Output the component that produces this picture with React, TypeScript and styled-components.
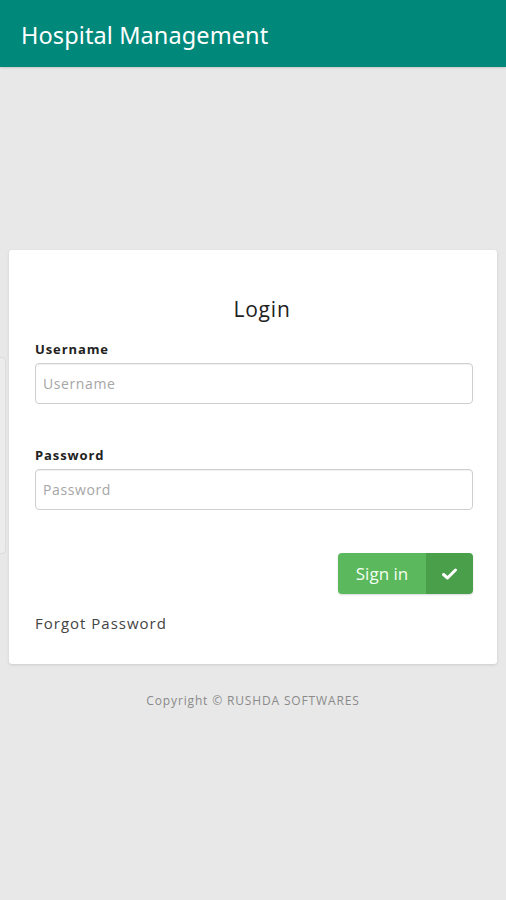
import React from "react";
import styled, { createGlobalStyle } from "styled-components";

const Global = createGlobalStyle`
  html, body { margin: 0; padding: 0; }
  body {
    background: #e8e8e8;
    font-family: "Open Sans", "Lato", sans-serif;
    width: 506px;
    min-height: 900px;
  }
`;

const Page = styled.div`
  position: relative;
  min-height: 900px;
  display: flex;
  flex-direction: column;
  background: #e8e8e8;
`;

const AppBar = styled.header`
  height: 67px;
  background: #00897b;
  display: flex;
  align-items: center;
  padding: 2px 0 0 21px;
  box-sizing: border-box;
  box-shadow: 0 1px 2px rgba(0, 0, 0, 0.15);
`;

const Title = styled.h1`
  margin: 0;
  color: #ffffff;
  font-family: "Noto Sans", "Open Sans", sans-serif;
  font-weight: 400;
  font-size: 23.5px;
  letter-spacing: 0.1px;
`;

const Content = styled.main`
  padding: 183px 9px 0 9px;
  display: flex;
  flex-direction: column;
  align-items: stretch;
`;

const Card = styled.section`
  background: #ffffff;
  border-radius: 3px;
  box-shadow: 0 1px 3px rgba(0, 0, 0, 0.12);
  padding: 45px 24px 31px 26px;
  display: flex;
  flex-direction: column;
`;

const CardTitle = styled.h2`
  margin: 0 0 17px 0;
  padding-left: 16px;
  text-align: center;
  font-family: "Open Sans", sans-serif;
  font-weight: 400;
  font-size: 21px;
  color: #222;
  letter-spacing: 0.8px;
`;

const Field = styled.div<{ $gap?: number }>`
  display: flex;
  flex-direction: column;
  margin-bottom: ${(p) => p.$gap ?? 0}px;
`;

const Label = styled.label`
  font-family: "Open Sans", sans-serif;
  font-weight: 700;
  font-size: 13px;
  color: #222;
  letter-spacing: 0.9px;
  margin-bottom: 5px;
`;

const Input = styled.input`
  height: 41px;
  box-sizing: border-box;
  border: 1px solid #cfcfcf;
  border-radius: 4px;
  padding: 0 7px;
  font-family: "Open Sans", sans-serif;
  font-size: 14px;
  color: #333;
  box-shadow: inset 0 1px 1px rgba(0, 0, 0, 0.06);
  outline: none;
  letter-spacing: 0.6px;
  &::placeholder {
    color: #a6a6a6;
  }
`;

const Actions = styled.div`
  display: flex;
  justify-content: flex-end;
  margin-top: 43px;
`;

const SignIn = styled.button`
  display: flex;
  height: 41px;
  padding: 0;
  border: none;
  border-radius: 4px;
  overflow: hidden;
  cursor: pointer;
  box-shadow: 0 1px 2px rgba(0, 0, 0, 0.15);
`;

const SignInText = styled.span`
  width: 88px;
  background: #5cb85c;
  color: #f3fff3;
  font-family: "Open Sans", sans-serif;
  font-size: 17px;
  display: flex;
  align-items: center;
  justify-content: center;
`;

const SignInIcon = styled.span`
  width: 47px;
  background: #4a9f4a;
  display: flex;
  align-items: center;
  justify-content: center;
`;

const Forgot = styled.a`
  margin-top: 19px;
  font-family: "Open Sans", sans-serif;
  font-size: 15px;
  color: #444;
  letter-spacing: 1px;
  text-decoration: none;
`;

const Copyright = styled.p`
  margin: 28px 0 0 0;
  text-align: center;
  font-family: "Open Sans", sans-serif;
  font-size: 12px;
  color: #8a8a8a;
  letter-spacing: 0.85px;
`;

const EdgeTab = styled.div`
  position: absolute;
  left: -6px;
  top: 357px;
  width: 10px;
  height: 195px;
  border: 1px solid #dcdcdc;
  border-radius: 4px;
  background: #ececec;
`;

export default function App() {
  return (
    <>
      <Global />
      <Page>
        <AppBar>
          <Title>Hospital Management</Title>
        </AppBar>
        <EdgeTab />
        <Content>
          <Card>
            <CardTitle>Login</CardTitle>
            <Field $gap={42}>
              <Label>Username</Label>
              <Input placeholder="Username" />
            </Field>
            <Field>
              <Label>Password</Label>
              <Input type="password" placeholder="Password" />
            </Field>
            <Actions>
              <SignIn>
                <SignInText>Sign in</SignInText>
                <SignInIcon>
                  <svg width="15" height="12" viewBox="0 0 15 12">
                    <path
                      d="M1.5 6.5 L5.5 10 L13.5 2"
                      fill="none"
                      stroke="#ffffff"
                      strokeWidth="3"
                      strokeLinecap="round"
                      strokeLinejoin="round"
                    />
                  </svg>
                </SignInIcon>
              </SignIn>
            </Actions>
            <Forgot href="#">Forgot Password</Forgot>
          </Card>
          <Copyright>Copyright © RUSHDA SOFTWARES</Copyright>
        </Content>
      </Page>
    </>
  );
}
